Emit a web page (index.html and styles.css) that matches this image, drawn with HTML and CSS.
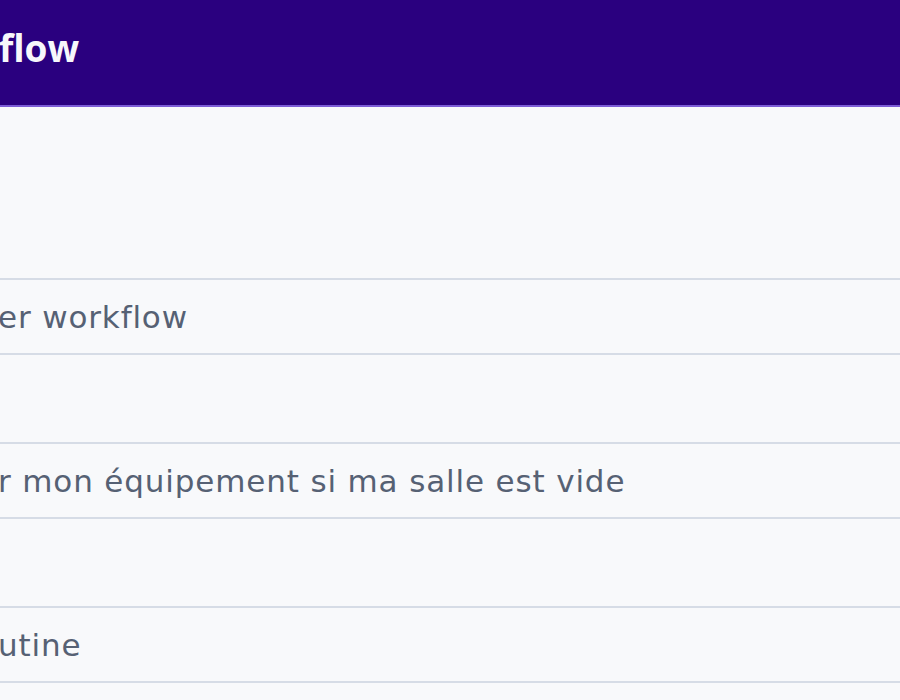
FILE: index.html
```html
<!DOCTYPE html>
<html lang="fr">
<head>
<meta charset="utf-8">
<title>Workflow</title>
<link rel="stylesheet" href="styles.css">
</head>
<body>
<header class="topbar">
  <h1 class="title">flow</h1>
</header>
<main class="form">
  <div class="field">
    <div class="input"><span class="value">er workflow</span></div>
  </div>
  <div class="field">
    <div class="input"><span class="value">r mon équipement si ma salle est vide</span></div>
  </div>
  <div class="field">
    <div class="input"><span class="value">utine</span></div>
  </div>
</main>
</body>
</html>
```
FILE: styles.css
```css
html, body {
  margin: 0;
  padding: 0;
}
body {
  width: 900px;
  height: 700px;
  overflow: hidden;
  background: #f8f9fb;
  font-family: "DejaVu Sans", "Open Sans", sans-serif;
}
.topbar {
  height: 105px;
  background: #2a007f;
  border-bottom: 2px solid #7c5cd6;
  display: flex;
  align-items: center;
}
.title {
  margin: 0 0 10px -1px;
  color: #f7f7fb;
  font-family: "Open Sans", sans-serif;
  font-size: 37px;
  font-weight: 700;
  letter-spacing: 0;
}
.form {
  display: flex;
  flex-direction: column;
  gap: 87px;
  padding-top: 171px;
}
.input {
  height: 73px;
  border-top: 2px solid #d6dce6;
  border-bottom: 2px solid #d6dce6;
  display: flex;
  align-items: center;
}
.value {
  margin-left: -2px;
  color: #566174;
  font-size: 31px;
  letter-spacing: 0.85px;
}
```
